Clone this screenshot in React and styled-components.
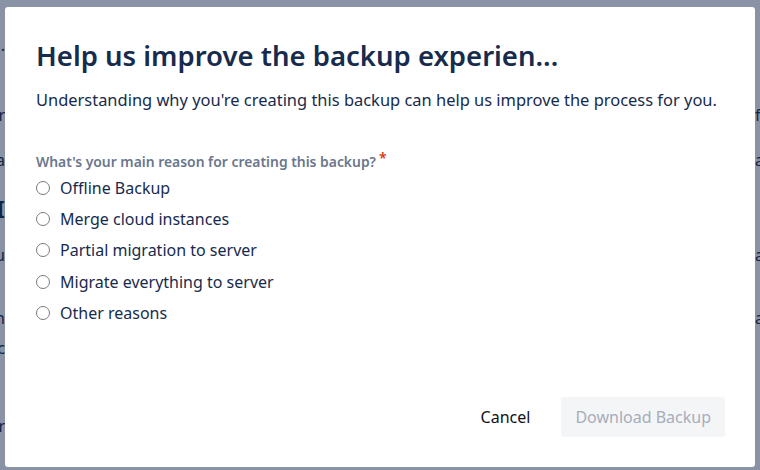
import React, { useState } from 'react';
import styled, { createGlobalStyle } from 'styled-components';

const GlobalStyle = createGlobalStyle`
    html, body {
        margin: 0;
        padding: 0;
        width: 760px;
        height: 470px;
        overflow: hidden;
        background: #fff;
        font-family: "Noto Sans", "Open Sans", sans-serif;
        color: #172b4d;
    }
`;

// the page that sits behind the dialog, only its edges peek out
const Page = styled.div`
    display: flex;
    flex-direction: column;
    width: 760px;
    height: 470px;
    font-size: 16px;
    color: #172b4d;
`;

const PageLine = styled.div`
    display: flex;
    justify-content: space-between;
    height: ${p => p.h || 20}px;
    margin-top: ${p => p.top}px;
    font-size: ${p => p.size || 16}px;
    font-weight: ${p => p.bold ? 600 : 400};
    line-height: ${p => p.h || 20}px;
`;

const Edge = styled.span`
    width: 5px;
    overflow: hidden;
    white-space: nowrap;
    direction: ${p => p.right ? 'ltr' : 'rtl'};
`;

const Blanket = styled.div`
    position: fixed;
    inset: 0;
    background: rgba(9, 30, 66, 0.48);
    display: flex;
    padding: 7px 5px 3px 5px;
`;

const Dialog = styled.div`
    flex: 1;
    background: #fff;
    border-radius: 3px;
    display: flex;
    flex-direction: column;
    padding: 31px 30px 30px 31px;
`;

const Title = styled.h1`
    margin: 0;
    font-size: 27.5px;
    font-weight: 600;
    line-height: 36px;
    color: #172b4d;
    white-space: nowrap;
`;

const Lead = styled.p`
    margin: 14px 0 0;
    font-size: 16.45px;
    line-height: 24px;
    color: #172b4d;
    white-space: nowrap;
`;

const Fieldset = styled.div`
    display: flex;
    flex-direction: column;
    margin-top: 40px;
`;

const Label = styled.div`
    font-size: 13.9px;
    font-weight: 600;
    line-height: 20px;
    color: #6b778c;
`;

const Required = styled.span`
    color: #de350b;
    font-size: 14px;
    margin-left: 3px;
    position: relative;
    top: -4px;
`;

const Options = styled.div`
    display: flex;
    flex-direction: column;
`;

const Option = styled.label`
    display: flex;
    align-items: center;
    gap: 10px;
    height: 31.3px;
    font-size: 16px;
    color: #172b4d;
    cursor: pointer;
`;

const Circle = styled.span`
    width: 14px;
    height: 14px;
    border-radius: 50%;
    border: 1px solid #7a7a7a;
    box-sizing: border-box;
    background: ${p => p.on ? 'radial-gradient(circle, #0052cc 3px, #fff 3.5px)' : '#fff'};
    flex-shrink: 0;
`;

const Footer = styled.div`
    margin-top: auto;
    display: flex;
    justify-content: flex-end;
    align-items: center;
    gap: 8px;
`;

const Button = styled.button`
    height: 40px;
    padding: 0 ${p => p.subtle ? '23px' : '14px'};
    border: none;
    border-radius: 3px;
    font-family: inherit;
    font-size: 16px;
    background: ${p => p.subtle ? 'transparent' : '#f4f5f7'};
    color: ${p => p.subtle ? '#111' : '#a5adba'};
    cursor: ${p => p.disabled ? 'not-allowed' : 'pointer'};
`;

const reasons = [
    'Offline Backup',
    'Merge cloud instances',
    'Partial migration to server',
    'Migrate everything to server',
    'Other reasons',
];

const behind = [
    { top: 40, l: '·', r: '' },
    { top: 45, l: 'r', r: 'f' },
    { top: 25, l: 'a', r: 'a' },
    { top: 25, l: 'I', r: '', size: 24, h: 28, bold: true },
    { top: 22, l: 'u', r: 'a' },
    { top: 43, l: 'n', r: 'a' },
    { top: 10, l: 'c', r: '' },
    { top: 58, l: 'r', r: '' },
];

export default function App() {
    const [reason, setReason] = useState(null);

    return (
        <>
            <GlobalStyle />
            <Page>
                {behind.map((line, i) => (
                    <PageLine key={i} top={line.top} size={line.size} h={line.h} bold={line.bold}>
                        <Edge>{line.l}</Edge>
                        <Edge right>{line.r}</Edge>
                    </PageLine>
                ))}
            </Page>
            <Blanket>
                <Dialog role="dialog">
                    <Title>Help us improve the backup experien...</Title>
                    <Lead>Understanding why you're creating this backup can help us improve the process for you.</Lead>
                    <Fieldset>
                        <Label>
                            What's your main reason for creating this backup?
                            <Required>*</Required>
                        </Label>
                        <Options>
                            {reasons.map(r => (
                                <Option key={r} onClick={() => setReason(r)}>
                                    <Circle on={reason === r} />
                                    {r}
                                </Option>
                            ))}
                        </Options>
                    </Fieldset>
                    <Footer>
                        <Button subtle>Cancel</Button>
                        <Button disabled={!reason}>Download Backup</Button>
                    </Footer>
                </Dialog>
            </Blanket>
        </>
    );
}
